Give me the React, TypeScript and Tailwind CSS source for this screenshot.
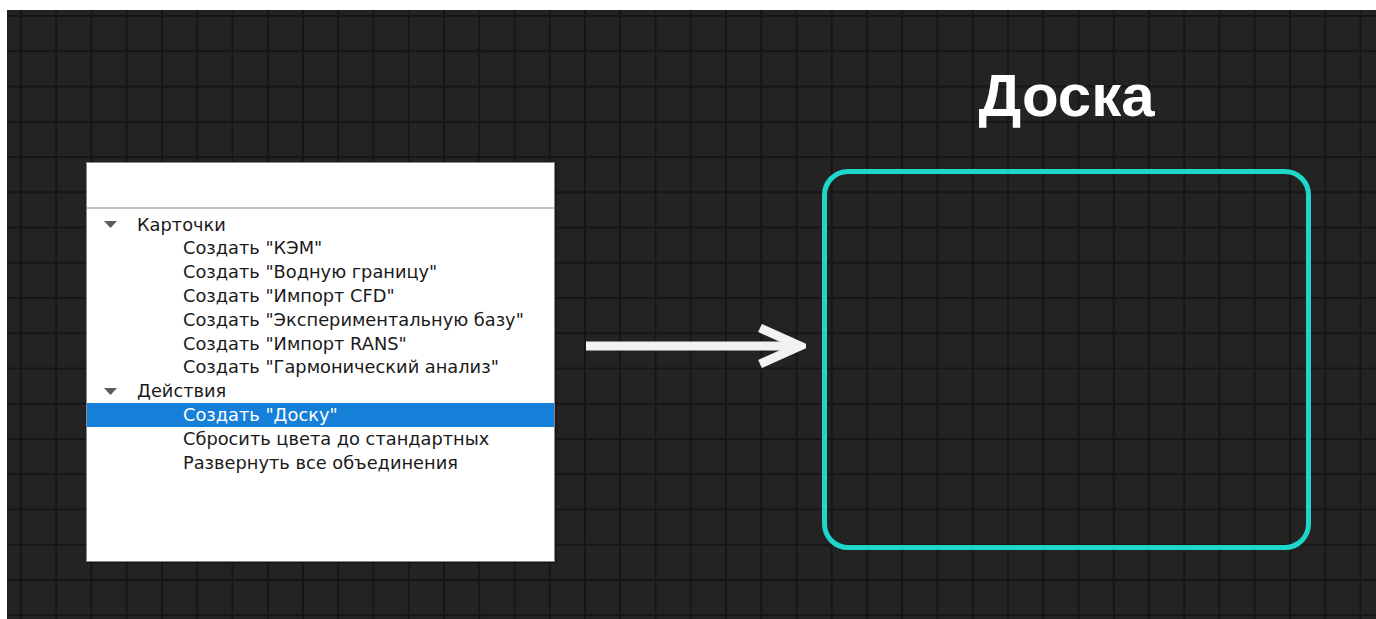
import React from 'react';

const cards = [
  'Создать "КЭМ"',
  'Создать "Водную границу"',
  'Создать "Импорт CFD"',
  'Создать "Экспериментальную базу"',
  'Создать "Импорт RANS"',
  'Создать "Гармонический анализ"',
];

const actions = ['Создать "Доску"', 'Сбросить цвета до стандартных', 'Развернуть все объединения'];

const Caret: React.FC = () => (
  <svg width="13" height="7" viewBox="0 0 13 7" className="shrink-0">
    <path d="M0 0 H13 L6.5 7 Z" fill="#5c5c5c" />
  </svg>
);

const GroupRow: React.FC<{ label: string }> = ({ label }) => (
  <div className="flex h-[23.8px] items-center pl-[17px]">
    <Caret />
    <span className="ml-[20px]">{label}</span>
  </div>
);

const ItemRow: React.FC<{ label: string; selected?: boolean }> = ({ label, selected }) => (
  <div
    className={`flex h-[23.8px] items-center pl-[96px] ${
      selected ? 'bg-[#1680d8] text-white' : ''
    }`}
  >
    {label}
  </div>
);

const App: React.FC = () => {
  return (
    <div className="h-[619px] w-[1376px] overflow-hidden bg-white pl-[7px] pt-[10px]">
      {/* холст с сеткой */}
      <div className="flex h-[609px] w-[1369px] items-start bg-[#232323] bg-[linear-gradient(to_right,#161616_2px,transparent_2px),linear-gradient(to_bottom,#161616_2px,transparent_2px)] bg-[size:35.25px_35.25px] bg-[position:13px_5px]">
        {/* контекстное меню */}
        <div className="ml-[79px] mt-[152px] flex h-[400px] w-[469px] shrink-0 flex-col border border-[#8a8a8a] bg-white font-['DejaVu_Sans',Verdana,sans-serif] text-[17.8px] text-[#1a1a1a] shadow-[1px_1px_2px_rgba(0,0,0,0.5)]">
          <div className="h-[46px] border-b-2 border-[#c4c4c4]" />
          <div className="pt-[4px]">
            <GroupRow label="Карточки" />
            {cards.map((c) => (
              <ItemRow key={c} label={c} />
            ))}
            <GroupRow label="Действия" />
            {actions.map((a, i) => (
              <ItemRow key={a} label={a} selected={i === 0} />
            ))}
          </div>
        </div>

        {/* стрелка */}
        <svg width="220" height="50" viewBox="0 0 220 50" className="ml-[31px] mt-[311px] shrink-0">
          <line x1="0" y1="25" x2="212" y2="25" stroke="#f2f2f2" strokeWidth="9" />
          <polyline points="174,7 214,25 174,43" fill="none" stroke="#f2f2f2" strokeWidth="9" />
        </svg>

        {/* доска */}
        <div className="ml-[16px] mt-[56px] flex w-[489px] shrink-0 flex-col items-center">
          <h1 className="font-['Liberation_Sans',Arial,sans-serif] text-[60px] font-bold leading-none text-white">
            Доска
          </h1>
          <div className="mt-[43px] h-[381px] w-[489px] rounded-[26px] border-[5px] border-[#1fd6ca]" />
        </div>
      </div>
    </div>
  );
};

export default App;
